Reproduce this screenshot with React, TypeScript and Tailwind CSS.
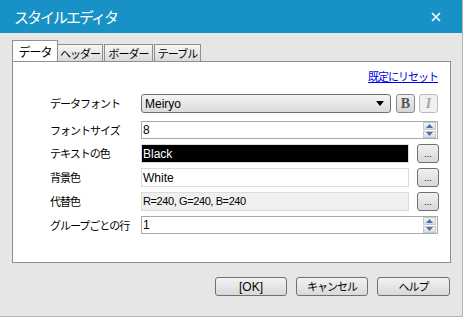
import React from "react";

const jp = { fontFamily: '"Noto Sans CJK JP", "Liberation Sans", sans-serif' };
const lat = { fontFamily: '"Liberation Sans", "Noto Sans CJK JP", sans-serif' };

function Spinner() {
  return (
    <div className="flex flex-col w-[13px] h-[16px] mr-[1px] gap-[1px]">
      <div className="flex-1 flex items-center justify-center bg-gradient-to-b from-[#f4f4f4] to-[#dcdcdc] border border-[#c8c8c8]">
        <svg width="7" height="4" viewBox="0 0 7 4"><path d="M3.5 0 L7 4 L0 4 Z" fill="#4f6fb5" /></svg>
      </div>
      <div className="flex-1 flex items-center justify-center bg-gradient-to-b from-[#f4f4f4] to-[#dcdcdc] border border-[#c8c8c8]">
        <svg width="7" height="4" viewBox="0 0 7 4"><path d="M0 0 L7 0 L3.5 4 Z" fill="#4f6fb5" /></svg>
      </div>
    </div>
  );
}

function DotsBtn() {
  return (
    <div className="ml-[8px] w-[22px] h-[19px] rounded-[3px] border border-[#707070] bg-gradient-to-b from-[#f2f2f2] to-[#d8d8d8] flex items-end justify-center pb-[3px]">
      <span className="text-[9px] leading-none text-black" style={lat}>...</span>
    </div>
  );
}

function Label({ children }: { children: React.ReactNode }) {
  return (
    <div className="w-[91px] text-[11px] tracking-[-1px] whitespace-nowrap text-black leading-none" style={jp}>
      {children}
    </div>
  );
}

function Btn({ children, w, latin }: { children: React.ReactNode; w: string; latin?: boolean }) {
  return (
    <div
      className={`${w} h-[19px] rounded-[3px] border border-[#707070] bg-gradient-to-b from-[#f2f2f2] to-[#d9d9d9] flex items-center justify-center text-black ${latin ? "text-[12px]" : "text-[11px] tracking-[-1px]"}`}
      style={latin ? lat : jp}
    >
      {children}
    </div>
  );
}

export default function App() {
  return (
    <div className="w-[463px] h-[317px] bg-[#e6e6e6] flex flex-col border-r border-b border-[#b5b5b5] overflow-hidden">
      {/* title bar */}
      <div className="h-[33px] bg-[#1791c6] flex items-center justify-between pl-[14px] pr-[21px] shrink-0">
        <span className="text-white text-[15px] tracking-[-2px] leading-none" style={jp}>スタイルエディタ</span>
        <svg width="10" height="10" viewBox="0 0 10 10">
          <path d="M1 1 L9 9 M9 1 L1 9" stroke="white" strokeWidth="1.6" />
        </svg>
      </div>

      {/* tabs */}
      <div className="pl-[12px] pt-[7px] flex items-end h-[28px] shrink-0">
        <div className="relative z-10 w-[46px] h-[21px] bg-white border border-b-0 border-[#8f8f8f] flex items-start justify-center pt-[2px] text-[12px] tracking-[-1px] text-black" style={jp}>
          データ
        </div>
        <div className="w-[46px] h-[18px] border border-[#8f8f8f] bg-gradient-to-b from-[#f6f6f6] to-[#d9d9d9] flex items-center justify-center text-[11px] tracking-[-1px] text-black ml-[-1px] -mb-[1px]" style={jp}>
          ヘッダー
        </div>
        <div className="w-[49px] h-[18px] border border-[#8f8f8f] bg-gradient-to-b from-[#f6f6f6] to-[#d9d9d9] flex items-center justify-center text-[11px] tracking-[-1px] text-black ml-[1px] -mb-[1px]" style={jp}>
          ボーダー
        </div>
        <div className="w-[47px] h-[18px] border border-[#8f8f8f] bg-gradient-to-b from-[#f6f6f6] to-[#d9d9d9] flex items-center justify-center text-[11px] tracking-[-1px] text-black ml-[1px] -mb-[1px]" style={jp}>
          テーブル
        </div>
      </div>

      {/* panel */}
      <div className="ml-[12px] w-[439px] h-[202px] bg-white border border-[#8f8f8f] shrink-0 flex flex-col">
        <div className="flex justify-end pr-[12px] pt-[9px] h-[32px]">
          <span className="text-[11px] tracking-[-1px] text-[#0000ee] underline leading-none" style={jp}>既定にリセット</span>
        </div>

        <div className="pl-[37px] flex flex-col">
          {/* font row */}
          <div className="flex items-center h-[19px]">
            <Label>データフォント</Label>
            <div className="w-[250px] h-[19px] rounded-[3px] border border-[#707070] bg-gradient-to-b from-[#f4f4f4] to-[#dbdbdb] flex items-center justify-between pl-[3px] pr-[6px]">
              <span className="text-[12px] text-black" style={lat}>Meiryo</span>
              <svg width="8" height="5" viewBox="0 0 8 5"><path d="M0 0 L8 0 L4 5 Z" fill="black" /></svg>
            </div>
            <div className="ml-[5px] w-[19px] h-[19px] rounded-[3px] border border-[#8a8a8a] bg-gradient-to-b from-[#f0f0f0] to-[#d5d5d5] flex items-center justify-center">
              <span className="text-[14px] font-bold text-[#555] leading-none" style={{ fontFamily: '"Liberation Serif", serif' }}>B</span>
            </div>
            <div className="ml-[4px] w-[19px] h-[19px] rounded-[3px] border border-[#bdbdbd] bg-[#f0f0f0] flex items-center justify-center">
              <span className="text-[14px] italic font-bold text-[#a5a5a5] leading-none" style={{ fontFamily: '"Liberation Serif", serif' }}>I</span>
            </div>
          </div>

          {/* font size */}
          <div className="flex items-center h-[18px] mt-[8px]">
            <Label>フォントサイズ</Label>
            <div className="w-[297px] h-[18px] border border-[#a9a9a9] bg-white flex items-center justify-between pl-[1px]">
              <span className="text-[12px] text-black leading-none" style={lat}>8</span>
              <Spinner />
            </div>
          </div>

          {/* text color */}
          <div className="flex items-center h-[19px] mt-[5px]">
            <Label>テキストの色</Label>
            <div className="w-[268px] h-[19px] border border-[#dcdcdc] bg-black flex items-center pl-[1px]">
              <span className="text-[12px] text-white leading-none" style={lat}>Black</span>
            </div>
            <DotsBtn />
          </div>

          {/* bg color */}
          <div className="flex items-center h-[19px] mt-[5px]">
            <Label>背景色</Label>
            <div className="w-[268px] h-[19px] border border-[#dcdcdc] bg-white flex items-center pl-[1px]">
              <span className="text-[12px] text-black leading-none" style={lat}>White</span>
            </div>
            <DotsBtn />
          </div>

          {/* alt color */}
          <div className="flex items-center h-[19px] mt-[5px]">
            <Label>代替色</Label>
            <div className="w-[268px] h-[19px] border border-[#dcdcdc] bg-[#f0f0f0] flex items-center pl-[1px]">
              <span className="text-[11px] tracking-[-0.4px] text-black leading-none" style={lat}>R=240, G=240, B=240</span>
            </div>
            <DotsBtn />
          </div>

          {/* rows per group */}
          <div className="flex items-center h-[18px] mt-[5px]">
            <Label>グループごとの行</Label>
            <div className="w-[297px] h-[18px] border border-[#a9a9a9] bg-white flex items-center justify-between pl-[1px]">
              <span className="text-[12px] text-black leading-none" style={lat}>1</span>
              <Spinner />
            </div>
          </div>
        </div>
      </div>

      {/* footer buttons */}
      <div className="flex justify-end gap-[9px] pr-[12px] mt-[14px]">
        <Btn w="w-[72px]" latin>[OK]</Btn>
        <Btn w="w-[72px]">キャンセル</Btn>
        <Btn w="w-[73px]">ヘルプ</Btn>
      </div>
    </div>
  );
}
